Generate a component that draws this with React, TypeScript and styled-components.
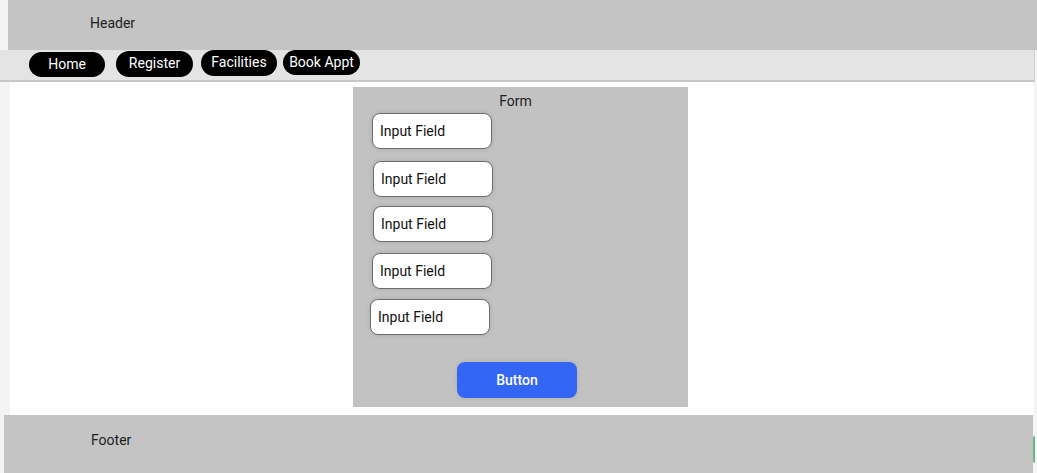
import React from 'react';
import styled, { createGlobalStyle } from 'styled-components';

const GlobalStyle = createGlobalStyle`
  html, body {
    margin: 0;
    padding: 0;
    overflow: hidden;
    background: #f4f4f4;
    font-family: Roboto, "Liberation Sans", sans-serif;
    font-size: 14px;
    color: #1e1e1e;
  }
`;

const Page = styled.div`
  display: flex;
  flex-direction: column;
  width: 1037px;
  height: 473px;
  position: relative;
`;

const Header = styled.header`
  display: flex;
  align-items: center;
  margin-left: 8px;
  height: 50px;
  padding: 0 0 5px 82px;
  background: #c4c4c4;
  box-sizing: border-box;
`;

const Nav = styled.nav`
  display: flex;
  align-items: flex-start;
  width: 1035px;
  height: 32px;
  padding-left: 29px;
  box-sizing: border-box;
  background: #e4e4e4;
  border-bottom: 2px solid #c6c6c6;
  border-right: 1px solid #cfcfcf;
`;

const NavPill = styled.a<{ $w: number; $top: number; $left: number; $h?: number }>`
  display: flex;
  align-items: center;
  justify-content: center;
  width: ${(p) => p.$w}px;
  height: ${(p) => p.$h ?? 25}px;
  margin-top: ${(p) => p.$top}px;
  margin-left: ${(p) => p.$left}px;
  padding-bottom: 2px;
  box-sizing: border-box;
  border-radius: 14px;
  background: #000;
  color: #fff;
  font-size: 14px;
  font-weight: 400;
  text-decoration: none;
  cursor: pointer;
`;

const Content = styled.main`
  display: flex;
  margin-left: 10px;
  width: 1024px;
  height: 333px;
  padding: 5px 0 8px 343px;
  box-sizing: border-box;
  background: #fff;
`;

const FormBox = styled.form`
  display: flex;
  flex-direction: column;
  align-items: flex-start;
  width: 335px;
  height: 320px;
  padding-top: 6px;
  box-sizing: border-box;
  background: #c2c2c2;
`;

const FormTitle = styled.div`
  align-self: stretch;
  text-align: center;
  padding-right: 10px;
  line-height: 16px;
  color: #1e1e1e;
`;

const Field = styled.div<{ $mt: number; $ml: number }>`
  display: flex;
  align-items: center;
  width: 120px;
  height: 36px;
  margin-top: ${(p) => p.$mt}px;
  margin-left: ${(p) => p.$ml}px;
  padding-left: 7px;
  box-sizing: border-box;
  background: #fff;
  border: 1px solid #6e6e6e;
  border-radius: 8px;
  box-shadow: 0 0 5px rgba(0, 0, 0, 0.12);
  color: #111;
`;

const SubmitButton = styled.button`
  width: 120px;
  height: 36px;
  margin-top: 27px;
  margin-left: 104px;
  border: none;
  border-radius: 8px;
  background: #3366f5;
  color: #fff;
  font-family: Roboto, "Liberation Sans", sans-serif;
  font-size: 14px;
  font-weight: 500;
  box-shadow: 0 0 5px rgba(0, 0, 0, 0.1);
`;

const Footer = styled.footer`
  display: flex;
  align-items: center;
  margin-left: 4px;
  width: 1029px;
  height: 58px;
  padding: 0 0 8px 87px;
  box-sizing: border-box;
  background: #c4c4c4;
`;

const SideTab = styled.div`
  position: absolute;
  left: 1033px;
  top: 436px;
  width: 2px;
  height: 27px;
  border-radius: 2px 0 0 2px;
  background: #64b883;
`;

const fields = [
  { mt: 4, ml: 19 },
  { mt: 12, ml: 20 },
  { mt: 9, ml: 20 },
  { mt: 11, ml: 19 },
  { mt: 10, ml: 17 },
];

const App: React.FC = () => {
  return (
    <>
      <GlobalStyle />
      <Page>
        <Header>Header</Header>

        <Nav>
          <NavPill $w={76} $top={2} $left={0}>Home</NavPill>
          <NavPill $w={77} $top={1} $left={11} $h={26}>Register</NavPill>
          <NavPill $w={76} $top={0} $left={8} $h={26}>Facilities</NavPill>
          <NavPill $w={77} $top={0} $left={6}>Book Appt</NavPill>
        </Nav>

        <Content>
          <FormBox onSubmit={(e) => e.preventDefault()}>
            <FormTitle>Form</FormTitle>
            {fields.map((f, i) => (
              <Field key={i} $mt={f.mt} $ml={f.ml}>Input Field</Field>
            ))}
            <SubmitButton type="submit">Button</SubmitButton>
          </FormBox>
        </Content>

        <Footer>Footer</Footer>
        <SideTab />
      </Page>
    </>
  );
};

export default App;
